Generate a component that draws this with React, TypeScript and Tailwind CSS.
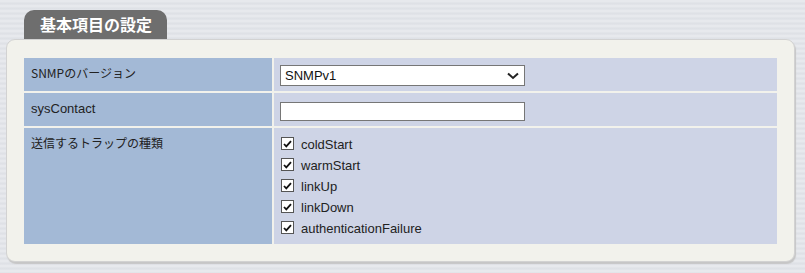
const traps = ["coldStart", "warmStart", "linkUp", "linkDown", "authenticationFailure"]

function Check() {
  return (
    <span className="w-[13px] h-[13px] border border-[#555] bg-white flex items-center justify-center shrink-0">
      <svg width="9" height="8" viewBox="0 0 9 8">
        <path d="M1 4 L3.3 6.4 L8 1.2" fill="none" stroke="#111" strokeWidth="1.8" />
      </svg>
    </span>
  )
}

export default function App() {
  return (
    <div className="w-[805px] h-[273px] pt-[10px] pl-[6px] bg-[repeating-linear-gradient(180deg,#e7e9ed_0px,#e7e9ed_2px,#dde0e5_3px,#e3e5ea_5px)] font-['Noto_Sans_CJK_JP','Liberation_Sans',sans-serif]">
      <div className="ml-[18px] w-[143px] h-[29px] bg-[#6e6e6e] rounded-t-[10px] text-white font-bold text-[16px] leading-[29px] pl-[16px]">
        基本項目の設定
      </div>
      <div className="w-[789px] h-[223px] bg-[#f2f2ec] border border-[#d2d2d2] rounded-[9px] shadow-[1px_2px_1px_#c6c6c6] px-[17px] pt-[18px]">
        <div className="grid grid-cols-[248px_1fr] gap-[2px] text-[12px] text-[#222]">
          <div className="bg-[#a3b9d6] h-[33px] pl-[7px] pt-[6px]">SNMPのバージョン</div>
          <div className="bg-[#ced4e6] h-[33px] pl-[6px] pt-[7px]">
            <div className="w-[245px] h-[21px] bg-white border border-[#767676] flex items-center justify-between pl-[4px] pr-[5px] font-['Liberation_Sans',sans-serif] text-[13px] text-[#111]">
              <span>SNMPv1</span>
              <svg width="12" height="8" viewBox="0 0 12 8">
                <path d="M1 1.5 L6 6 L11 1.5" fill="none" stroke="#222" strokeWidth="2" />
              </svg>
            </div>
          </div>
          <div className="bg-[#a3b9d6] h-[33px] pl-[7px] pt-[6px] font-['Liberation_Sans',sans-serif] text-[13px]">sysContact</div>
          <div className="bg-[#ced4e6] h-[33px] pl-[6px] pt-[9px]">
            <div className="w-[245px] h-[19px] bg-white border border-[#767676]" />
          </div>
          <div className="bg-[#a3b9d6] h-[116px] pl-[7px] pt-[6px]">送信するトラップの種類</div>
          <div className="bg-[#ced4e6] h-[116px] pl-[7px] pt-[9px] flex flex-col gap-[8px]">
            {traps.map((t) => (
              <div key={t} className="flex items-center gap-[7px] h-[13px] font-['Liberation_Sans',sans-serif] text-[13px]">
                <Check />
                <span className="leading-[13px] pt-[2px]">{t}</span>
              </div>
            ))}
          </div>
        </div>
      </div>
    </div>
  )
}
